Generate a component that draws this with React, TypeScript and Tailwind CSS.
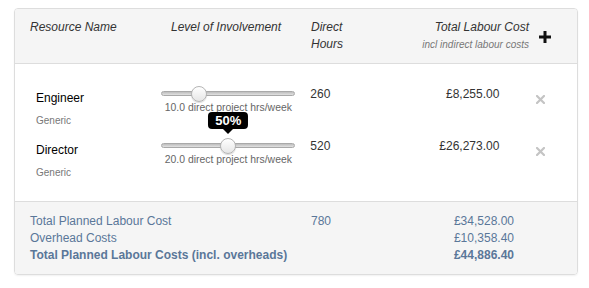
const rows = [
  { name: "Engineer", kind: "Generic", pct: 0.28, hrs: "10.0", direct: "260", cost: "£8,255.00", tip: false },
  { name: "Director", kind: "Generic", pct: 0.5, hrs: "20.0", direct: "520", cost: "£26,273.00", tip: true },
];

function Slider({ pct, tip }: { pct: number; tip: boolean }) {
  return (
    <div className="relative h-[16px] w-[134px]">
      <div className="absolute left-0 right-0 top-[5px] h-[5px] rounded-full border border-[#a9a9a9] bg-gradient-to-b from-[#bdbdbd] to-[#e2e2e2]" />
      <div
        className="absolute top-0 h-[16px] w-[16px] -translate-x-1/2 rounded-full border border-[#b5b5b5] bg-gradient-to-b from-white to-[#e6e6e6] shadow-[0_1px_1px_rgba(0,0,0,0.15)]"
        style={{ left: `${pct * 100}%` }}
      />
      {tip && (
        <div
          className="absolute bottom-[20px] -translate-x-1/2 flex flex-col items-center"
          style={{ left: `${pct * 100}%` }}
        >
          <div className="rounded-[4px] bg-black px-[7px] h-[17px] leading-[17px] text-[13px] font-bold text-white">50%</div>
          <div className="h-0 w-0 border-x-[5px] border-t-[5px] border-x-transparent border-t-black" />
        </div>
      )}
    </div>
  );
}

function Cross() {
  return (
    <svg width="9" height="9" viewBox="0 0 9 9">
      <path d="M1 1L8 8M8 1L1 8" stroke="#c4c4c4" strokeWidth="2.2" strokeLinecap="square" />
    </svg>
  );
}

export default function App() {
  return (
    <div className="h-[288px] w-[589px] bg-white pt-[8px] pl-[14px] font-['Liberation_Sans',Arial,sans-serif] text-[#333]">
      <div className="w-[564px] overflow-hidden rounded-[4px] border border-[#dddddd] shadow-[0_1px_2px_rgba(0,0,0,0.06)]">
        {/* header */}
        <div className="flex items-start border-b border-[#dddddd] bg-[#f5f5f5] pl-[15px] pt-[10px] pb-[10px] text-[12px] italic leading-[17px]">
          <div className="w-[141px]">Resource Name</div>
          <div className="w-[140px]">Level of Involvement</div>
          <div className="w-[60px]">
            Direct
            <br />
            Hours
          </div>
          <div className="flex w-[158px] flex-col items-end">
            <div>Total Labour Cost</div>
            <div className="text-[10px] text-[#777]">incl indirect labour costs</div>
          </div>
          <div className="flex flex-1 pl-[10px] pt-[12px]">
            <svg width="12" height="12" viewBox="0 0 12 12">
              <path d="M4.5 0H7.5V4.5H12V7.5H7.5V12H4.5V7.5H0V4.5H4.5Z" fill="#111" />
            </svg>
          </div>
        </div>

        {/* body */}
        <div className="flex flex-col gap-[16px] bg-white pt-[22px] pb-[27px]">
          {rows.map((r) => (
            <div key={r.name} className="flex h-[36px] items-start">
              <div className="w-[147px] pl-[21px] pt-[4px]">
                <div className="text-[12px] leading-[17px] text-black">{r.name}</div>
                <div className="mt-[7px] text-[10px] leading-[14px] text-[#777]">{r.kind}</div>
              </div>
              <div className="flex w-[134px] flex-col items-center">
                <Slider pct={r.pct} tip={r.tip} />
                <div className="whitespace-nowrap text-[10.4px] leading-[12px] text-[#666]">{r.hrs} direct project hrs/week</div>
              </div>
              <div className="w-[75px] pl-[15px] text-[12px] leading-[17px]">{r.direct}</div>
              <div className="w-[130px] text-right text-[12px] leading-[17px]">{r.cost}</div>
              <div className="flex w-[78px] justify-center pl-[4px] pt-[9px]">
                <Cross />
              </div>
            </div>
          ))}
        </div>

        {/* footer */}
        <div className="flex border-t border-[#dddddd] bg-[#f5f5f5] pl-[15px] pt-[11px] pb-[10px] text-[12px] leading-[17px] text-[#5a7799]">
          <div className="w-[281px]">
            <div>Total Planned Labour Cost</div>
            <div>Overhead Costs</div>
            <div className="font-bold">Total Planned Labour Costs (incl. overheads)</div>
          </div>
          <div className="w-[60px]">780</div>
          <div className="flex w-[143px] flex-col items-end">
            <div>£34,528.00</div>
            <div>£10,358.40</div>
            <div className="font-bold">£44,886.40</div>
          </div>
        </div>
      </div>
    </div>
  );
}
